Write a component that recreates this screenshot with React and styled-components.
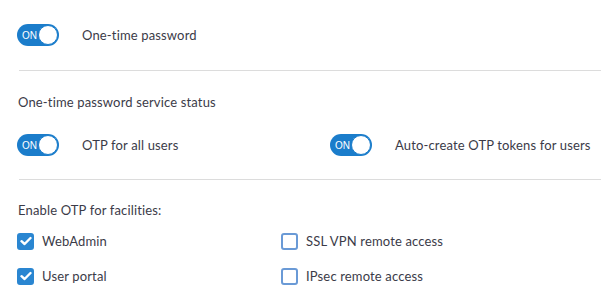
import React from "react";
import styled, { createGlobalStyle } from "styled-components";

const GlobalStyle = createGlobalStyle`
  body {
    margin: 0;
    background: #ffffff;
    font-family: "Lato", "Liberation Sans", sans-serif;
  }
`;

const Page = styled.div`
  padding: 24px 0 0 17px;
  color: #3b3b48;
  font-size: 13px;
  letter-spacing: 0.15px;
`;

const Section = styled.div`
  padding: ${(p) => p.$pad || "0"};
`;

const Divider = styled.hr`
  border: 0;
  border-top: 1px solid #dcdcdc;
  margin: 0 0 0 2px;
`;

const Title = styled.div`
  line-height: 18px;
  padding-left: 1px;
  margin-bottom: ${(p) => p.$gap || "22px"};
`;

const ToggleRow = styled.div`
  display: flex;
  align-items: center;
`;

const ToggleItem = styled.div`
  display: flex;
  align-items: center;
  width: ${(p) => p.$width || "auto"};
`;

const Switch = styled.div`
  width: 42px;
  height: 22px;
  border-radius: 11px;
  background: #1b7dcb;
  display: flex;
  align-items: center;
  justify-content: space-between;
  box-sizing: border-box;
  padding: 0 1px 0 5px;
  flex-shrink: 0;
`;

const SwitchText = styled.span`
  color: #ffffff;
  font-size: 10px;
  font-family: "Liberation Sans", sans-serif;
  letter-spacing: 0;
`;

const Knob = styled.span`
  width: 20px;
  height: 20px;
  border-radius: 50%;
  background: #ffffff;
  box-sizing: border-box;
  border: 1px solid #1b7dcb;
`;

const ToggleLabel = styled.span`
  margin-left: 23px;
  line-height: 18px;
`;

const CheckGrid = styled.div`
  display: grid;
  grid-template-columns: 264px auto;
  row-gap: 17px;
`;

const CheckItem = styled.label`
  display: flex;
  align-items: center;
  gap: 8px;
  line-height: 18px;
`;

const Box = styled.span`
  width: 17px;
  height: 17px;
  box-sizing: border-box;
  border-radius: 3px;
  display: flex;
  align-items: center;
  justify-content: center;
  background: ${(p) => (p.$checked ? "#2a86d1" : "#ffffff")};
  border: 2px solid ${(p) => (p.$checked ? "#2a86d1" : "#6a9ad6")};
`;

function Toggle({ label, width }) {
  return (
    <ToggleItem $width={width}>
      <Switch>
        <SwitchText>ON</SwitchText>
        <Knob />
      </Switch>
      <ToggleLabel>{label}</ToggleLabel>
    </ToggleItem>
  );
}

function Check({ label, checked }) {
  return (
    <CheckItem>
      <Box $checked={checked}>
        {checked && (
          <svg width="12" height="10" viewBox="0 0 12 10">
            <path d="M1.5 5.2 L4.6 8 L10.5 2" fill="none" stroke="#fff" strokeWidth="2.4" strokeLinecap="round" strokeLinejoin="round" />
          </svg>
        )}
      </Box>
      {label}
    </CheckItem>
  );
}

export default function App() {
  return (
    <>
      <GlobalStyle />
      <Page>
        <Section $pad="0 0 24px 0">
          <Toggle label="One-time password" />
        </Section>
        <Divider />
        <Section $pad="22px 0 23px 0">
          <Title $gap="23px">One-time password service status</Title>
          <ToggleRow>
            <Toggle label="OTP for all users" width="313px" />
            <Toggle label="Auto-create OTP tokens for users" />
          </ToggleRow>
        </Section>
        <Divider />
        <Section $pad="21px 0 0 0">
          <Title $gap="13px">Enable OTP for facilities:</Title>
          <CheckGrid>
            <Check label="WebAdmin" checked />
            <Check label="SSL VPN remote access" />
            <Check label="User portal" checked />
            <Check label="IPsec remote access" />
          </CheckGrid>
        </Section>
      </Page>
    </>
  );
}
